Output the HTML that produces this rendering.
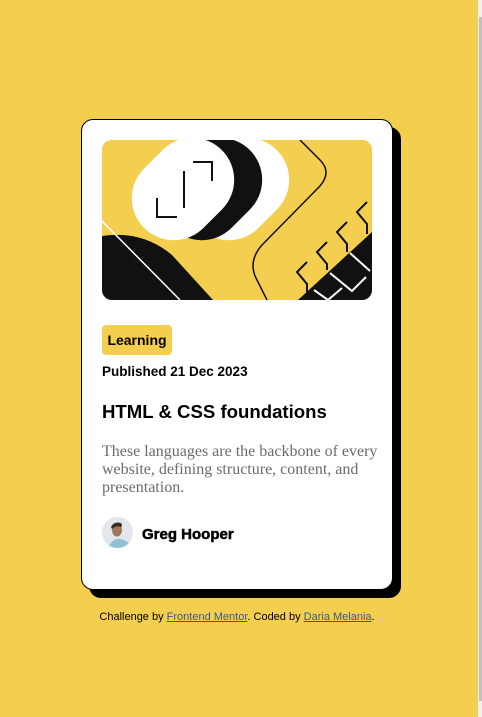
<!DOCTYPE html>
<html><head><style>
body{margin:0;width:482px;height:717px;background:#f4ce4e;position:relative;overflow:hidden;font-family:"Liberation Sans",sans-serif}
.sb{position:absolute;right:0;top:0;width:4px;height:717px;background:#f0f0f0}
.sb div{position:absolute;left:1px;top:17px;width:3px;height:684px;background:#c1c1c1}
.card{position:absolute;left:81px;top:119px;width:310px;height:469px;background:#fff;border:1px solid #000;border-radius:12px;box-shadow:8px 8px 0 #000}
.img{position:absolute;left:20px;top:20px;width:270px;height:160px;border-radius:10px;overflow:hidden;background:#f4ce4e}
.tag{position:absolute;left:20px;top:205px;width:70px;height:30px;background:#f4ce4e;border-radius:4px;font-weight:bold;font-size:14px;line-height:30px;text-align:center}
.pub{position:absolute;left:20px;top:244px;font-size:13.5px;font-weight:bold}
h1{position:absolute;left:20px;top:281px;margin:0;font-size:18.6px;font-weight:bold}
p{position:absolute;left:20px;top:323px;width:282px;margin:0;font-family:"Liberation Serif",serif;font-size:16px;line-height:18px;color:#6b6b6b}
.av{position:absolute;left:20px;top:397px;width:31px;height:31px;border-radius:50%;overflow:hidden;background:#dde3e8}
.nm{position:absolute;left:60px;top:406px;font-weight:bold;font-size:15px;-webkit-text-stroke:0.5px #000}
.foot{position:absolute;left:0;width:474px;top:611px;text-align:center;font-size:11px}
.foot a{color:#3e52a3;text-decoration:underline}
</style></head><body>
<div class="sb"><div></div></div>
<div class="card">
<div class="img"><svg width="270" height="160" viewBox="0 0 270 160">
<rect width="270" height="160" fill="#f4ce4e"/>
<rect x="-55" y="-42" width="110" height="84" rx="42" fill="#fff" transform="translate(136,49) rotate(-45)"/>
<rect x="-55" y="-42" width="110" height="84" rx="42" fill="#111" transform="translate(109,49) rotate(-45)"/>
<rect x="-55" y="-42" width="110" height="84" rx="42" fill="#fff" transform="translate(81,49) rotate(-45)"/>
<path d="M91 22h19v19M55 58v19h20M82 31v37" stroke="#111" stroke-width="2" fill="none"/>
<path d="M0 96 Q40 90 70 115 L111 160 L0 160Z" fill="#111"/>
<path d="M0 81 L78 160" stroke="#fff" stroke-width="1.5"/>
<path d="M198 0 L218 20 Q230 32 218 46 L160 105 Q145 122 155 140 L165 160" stroke="#111" stroke-width="1.5" fill="none"/>
<path d="M196 160 L270 92 L270 160Z" fill="#111"/>
<path d="M265 62l-10 10 10 12v10M245 82l-10 10 10 12v8M225 102l-10 10 10 12v6M205 122l-10 10 10 12v10" stroke="#111" stroke-width="2" fill="none"/>
<path d="M248 113l20 18M228 133l22 18 14-14M212 150l14 10 14-12" stroke="#fff" stroke-width="2" fill="none"/>
</svg></div>
<div class="tag">Learning</div>
<div class="pub">Published 21 Dec 2023</div>
<h1>HTML &amp; CSS foundations</h1>
<p>These languages are the backbone of every website, defining structure, content, and presentation.</p>
<div class="av"><svg width="31" height="31"><rect width="31" height="31" fill="#e3e6ea"/><path d="M6 31 Q10 21 18 22 Q27 23 28 31Z" fill="#8fc1d6"/><ellipse cx="15" cy="13" rx="5" ry="6.5" fill="#a0785f"/><path d="M9 10 Q12 4 19 6 Q21 9 19 10 Q14 8 10 12Z" fill="#3a2a20"/></svg></div>
<div class="nm">Greg Hooper</div>
</div>
<div class="foot">Challenge by <a>Frontend Mentor</a>. Coded by <a>Daria Melania</a>.</div>
</body></html>
